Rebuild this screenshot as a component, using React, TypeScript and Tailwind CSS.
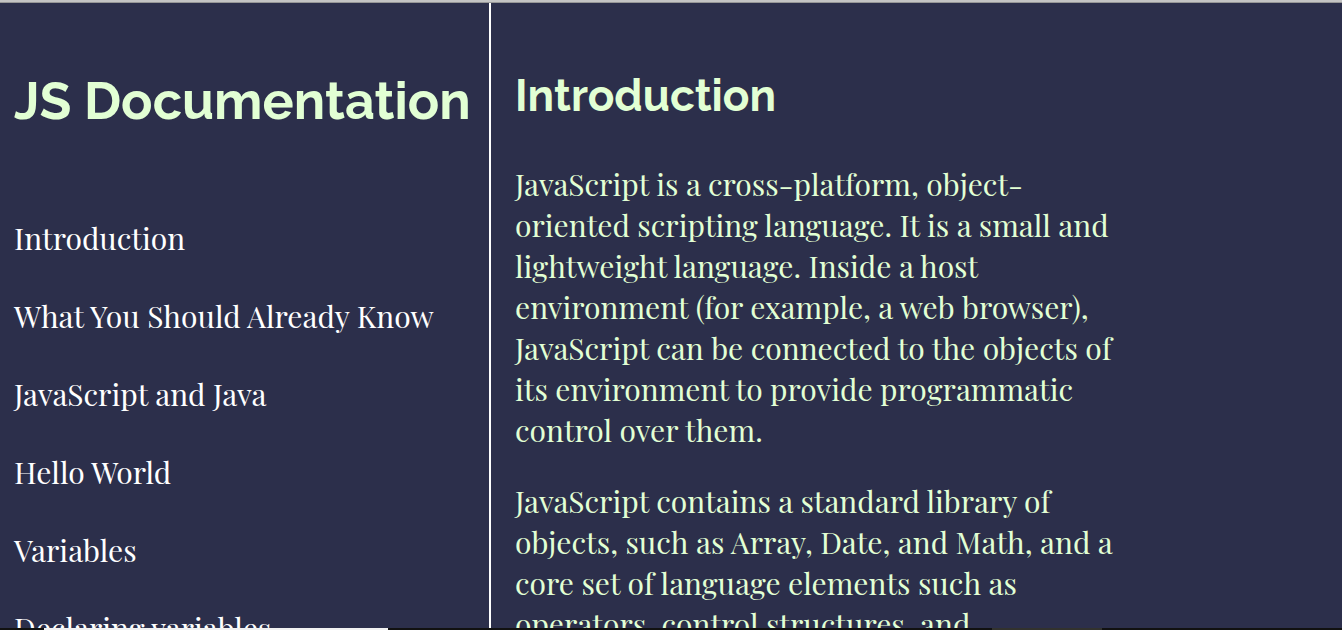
const links = ["Introduction", "What You Should Already Know", "JavaScript and Java", "Hello World", "Variables", "Declaring variables"];

export default function App() {
  return (
    <div className="flex h-screen flex-col overflow-hidden bg-[#2c2f4b]">
      <div className="h-[3px] shrink-0 border-b border-[#979797] bg-[#c4c4c4]" />
      <div className="flex min-h-0 grow">
        <nav className="w-[491px] shrink-0 overflow-hidden border-r-2 border-white pl-[14px] pt-[66px]">
          <h1 className="whitespace-nowrap font-['Raleway','Open_Sans',sans-serif] text-[52px] font-bold leading-[64px] text-[#e2ffd4]">JS Documentation</h1>
          <ul className="mt-[85px] flex flex-col gap-[38px] font-['Playfair_Display','Liberation_Serif',serif] text-[30px] leading-[40px] text-white">
            {links.map((l) => (
              <li key={l}><a href="#intro" className="whitespace-nowrap">{l}</a></li>
            ))}
          </ul>
        </nav>
        <main id="intro" className="min-w-0 grow overflow-hidden pl-[24px] pt-[65px] text-[#e2ffd4]">
          <h2 className="font-['Raleway','Open_Sans',sans-serif] text-[44px] font-bold leading-[56px]">Introduction</h2>
          <div className="mt-[40px] flex max-w-[610px] flex-col gap-[30px] font-['Playfair_Display','Liberation_Serif',serif] text-[30px] leading-[41px]">
            <p>JavaScript is a cross-platform, object-oriented scripting language. It is a small and lightweight language. Inside a host environment (for example, a web browser), JavaScript can be connected to the objects of its environment to provide programmatic control over them.</p>
            <p>JavaScript contains a standard library of objects, such as Array, Date, and Math, and a core set of language elements such as operators, control structures, and</p>
          </div>
        </main>
      </div>
      <div className="flex h-[2px] shrink-0 bg-[#111111] pl-[44px]">
        <div className="w-[344px] bg-[#f2f2f2]" />
        <div className="ml-[604px] w-[110px] bg-[#32322e]" />
      </div>
    </div>
  );
}
